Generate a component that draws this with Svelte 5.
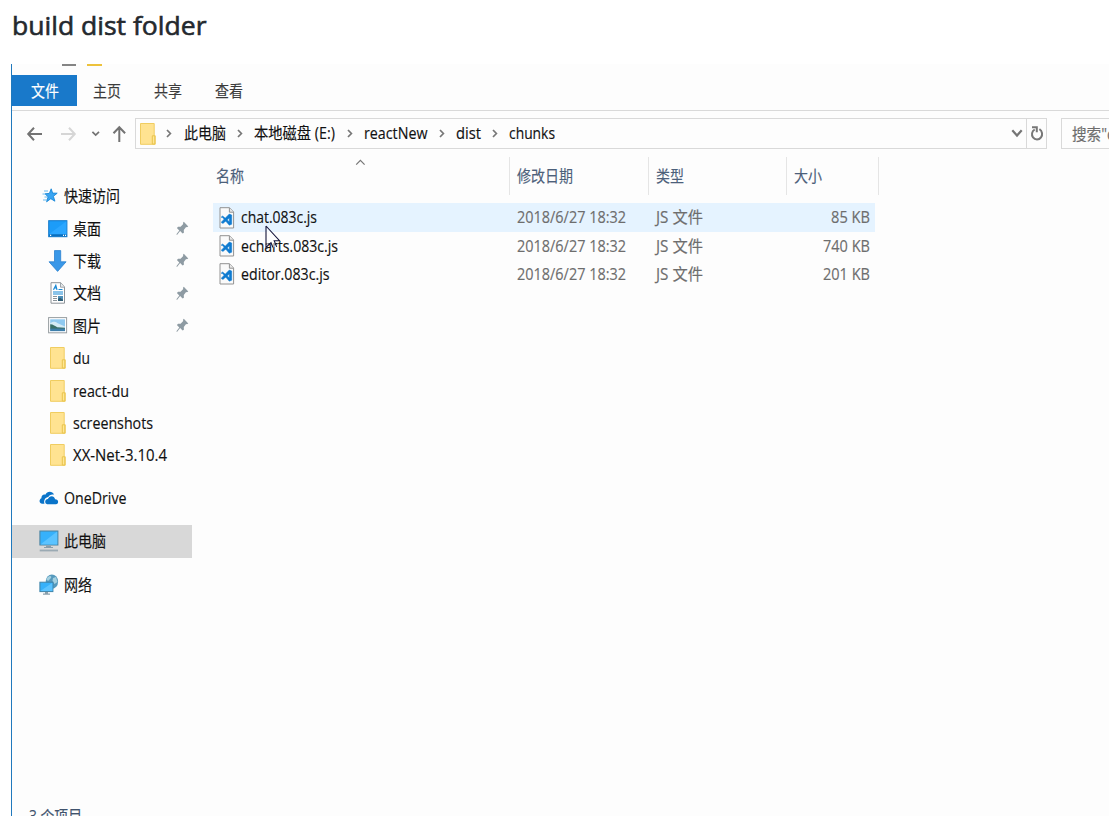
<script>
  const tabs = ['主页', '共享', '查看'];
  const crumbs = [
    { name: '此电脑', w: 42, slot: 70.5 },
    { name: '本地磁盘 (E:)', w: 81, slot: 110 },
    { name: 'reactNew', w: 63.5, slot: 92 },
    { name: 'dist', w: 25, slot: 53 },
    { name: 'chunks', w: 46, slot: 60 },
  ];
  const links = [
    { name: '桌面', w: 28, icon: 'desktop', pin: true },
    { name: '下载', w: 28, icon: 'download', pin: true },
    { name: '文档', w: 28, icon: 'document', pin: true },
    { name: '图片', w: 28, icon: 'picture', pin: true },
    { name: 'du', w: 17, icon: 'folder' },
    { name: 'react-du', w: 56, icon: 'folder' },
    { name: 'screenshots', w: 80, icon: 'folder' },
    { name: 'XX-Net-3.10.4', w: 94, icon: 'folder' },
  ];
  const files = [
    { name: 'chat.083c.js', w: 76, size: '85 KB', sw: 39, active: true },
    { name: 'echarts.083c.js', w: 97, size: '740 KB', sw: 47 },
    { name: 'editor.083c.js', w: 88.5, size: '201 KB', sw: 47 },
  ];
</script>

{#snippet label(text, w)}
  <svg class="label" width={w} height="22" viewBox="0 0 {w} 22">
    <text x="0" y="16.5" textLength={w} lengthAdjust="spacingAndGlyphs">{text}</text>
  </svg>
{/snippet}

{#snippet folder()}
  <svg width="16" height="22" viewBox="0 0 16 22">
    <path d="M.5.5h13.7v12.2h1v8.6H.5z" fill="#ffe391" stroke="#f0cd60" />
    <path d="M12.3 21v-8.2h2.5V21z" fill="#ffe793" stroke="#e9c34d" />
  </svg>
{/snippet}

{#snippet chevron()}
  <svg width="6" height="9" viewBox="0 0 6 9"><path d="M1 1l3.4 3.5L1 8" fill="none" stroke="#777" stroke-width="1.7" /></svg>
{/snippet}

{#snippet icon(kind)}
  {#if kind === 'desktop'}
    <svg width="20" height="18" viewBox="0 0 20 18">
      <rect x=".7" y=".7" width="18.2" height="16" fill="#1c9cf8" stroke="#1478c8" />
      <path d="M1.2 14L18.4 1.2v13z" fill="#2ba6ff" />
      <path d="M1.2 15.3h17.2" stroke="#0b6fbd" stroke-width="2" />
      <path d="M2 15.3h1.2M15 15.3h1M17 15.3h1" stroke="#fff" stroke-width="1.2" />
    </svg>
  {:else if kind === 'download'}
    <svg width="20" height="22" viewBox="0 0 20 22">
      <path d="M6.5.6h6.2v11.2h5.4L9.6 21.4 1 11.8h5.5z" fill="#3a98e8" stroke="#2b82cf" stroke-width=".8" />
    </svg>
  {:else if kind === 'document'}
    <svg width="16" height="22" viewBox="0 0 16 22">
      <path d="M1 .7h9.7L14.5 5v16.2H1z" fill="#fff" stroke="#8d9398" />
      <path d="M10.5.8v4.4h4" fill="#e4e8eb" stroke="#8d9398" stroke-width=".8" />
      <path d="M3.5 7.8L5.8 3.3 7 7.8M4.5 6h2.3M8.5 7.5h4M3 10h10M3 12h10" fill="none" stroke="#1687d4" stroke-width="1.2" />
      <path d="M3 14.5h4M3 16.5h4M3 18.5h4" stroke="#8b949b" />
      <rect x="8" y="14" width="5" height="5" fill="#4d8fb8" />
      <path d="M8 19v-2.2l2-1 3 2V19z" fill="#315d74" />
    </svg>
  {:else if kind === 'picture'}
    <svg width="20" height="17" viewBox="0 0 20 17">
      <rect x=".6" y=".6" width="18" height="15.2" fill="#fff" stroke="#979da1" />
      <rect x="2.2" y="2.3" width="14.8" height="11.8" fill="#8fc9f0" />
      <path d="M2.2 6c3-1 4-2 7 0l7.8 3.5v3.6H2.2z" fill="#d3eaf5" />
      <path d="M2.2 7.2c3 0 5 2 7 3l7.8.6v1.4H2.2z" fill="#396f68" />
      <path d="M2.2 11.6H17v2.5H2.2z" fill="#3d7eaa" />
    </svg>
  {:else}
    {@render folder()}
  {/if}
{/snippet}

<h1>
  <svg width="200" height="40" viewBox="0 0 200 40"><text x="0" y="25" textLength="194.5" lengthAdjust="spacingAndGlyphs">build dist folder</text></svg>
</h1>

<main>
  <div class="quickbar"><i></i><b></b></div>
  <nav class="tabs">
    <span class="file">{@render label('文件', 28)}</span>
    {#each tabs as tab}<span class="tab">{@render label(tab, 28)}</span>{/each}
  </nav>

  <div class="toolbar">
    <div class="arrows">
      <svg width="110" height="20" viewBox="0 0 110 20" fill="none" stroke="#737373" stroke-width="2">
        <path d="M16 10h14M22 3.7L16.2 10l5.8 6.3" />
        <path d="M49 10h13M57 3.7l5.8 6.3-5.8 6.3" stroke="#d6d6d6" />
        <path d="M80.4 7.8l3.3 3.3L87 7.8" stroke-width="1.7" />
        <path d="M107.3 18V3M101.5 9.2l5.8-6 5.8 6" />
      </svg>
    </div>
    <div class="address">
      <span class="addricon">{@render folder()}</span>
      {#each crumbs as c}
        <span class="crumb" style:width="{c.slot}px">{@render chevron()}{@render label(c.name, c.w)}</span>
      {/each}
      <span class="drop"><svg width="12" height="9" viewBox="0 0 12 9"><path d="M1.3 1.3L6 6.5l4.7-5.2" fill="none" stroke="#757575" stroke-width="2.2" /></svg></span>
      <span class="refresh">
        <svg width="14" height="17" viewBox="0 0 14 17" fill="none" stroke="#777" stroke-width="2">
          <path d="M9.4 4.2C12.5 6 12.8 10 11 12.3c-2 2.8-6 2.8-8 .1C1.2 9.9 1.8 6.2 4.7 4.5" />
          <path d="M2 2.2h4.8v5" />
        </svg>
      </span>
    </div>
    <div class="search">{@render label('搜索"d', 44)}</div>
  </div>

  <div class="body">
    <aside>
      <div class="row root">
        <span class="ri quick"><svg width="18" height="18" viewBox="0 0 18 18">
          <path d="M10.2 1.8l1.4 4.3 4.6.1-3.8 3.1 1.5 4.9-4.1-2.5-4.2 3.1 1.5-5L4 6.8l4.4-.4z" fill="#39a5f2" stroke="#1787d8" stroke-width=".9" />
          <path d="M3 4h4M1.5 7h3M3.5 10H6M2 13h4" stroke="#68b9ee" />
        </svg></span>
        {@render label('快速访问', 56)}
      </div>
      {#each links as link}
        <div class="row">
          <span class="li">{@render icon(link.icon)}</span>
          {@render label(link.name, link.w)}
          {#if link.pin}
            <svg class="pin" width="13" height="15" viewBox="0 0 13 15">
              <path d="M7.8.8l4.5 4.7-1.4.8-.8-.3-2.3 3 .1 2.7-1.3.9-2.5-2.7L1 13.9l-.6-.6 2.9-3.9L.9 6.9l1.2-1.2 2.5.1L7.2 3 7 1.7z" fill="#8e9ba3" />
            </svg>
          {/if}
        </div>
      {/each}
      <div class="row root gap">
        <span class="ri"><svg width="20" height="14" viewBox="0 0 20 14">
          <path d="M5.5 12.8H3.2C.2 12.6-.4 8.5 2.4 7.2 2.2 4.5 4.5 3 6.3 3.7 8-.1 13.5-.2 15 3.7c-3.2-.5-4.7.6-5.7 2.2-2.9.2-5 3.4-3.8 6.9z" fill="#0a74c9" />
          <path d="M8.2 13.3c-3-.6-2.5-5 .7-5.2C10 4.5 15.2 4 16.1 8.2c3.8-.1 4 4.8.8 5.1z" fill="#0a74c9" />
        </svg></span>
        {@render label('OneDrive', 62.5)}
      </div>
      <div class="row root gap selected">
        <span class="ri"><svg width="20" height="22" viewBox="0 0 20 22">
          <rect x=".9" y="1" width="18" height="14" fill="#36b1fb" stroke="#4d819d" />
          <path d="M1.4 14.4L18.2 1.6v12.8z" fill="#5bc3ff" />
          <path d="M7 15.5h5v1.6h2v.9H5v-.9h2z" fill="#8a9eaa" />
          <path d="M.7 20.5h18.3" stroke="#9baab3" stroke-width="1.8" />
        </svg></span>
        {@render label('此电脑', 42)}
      </div>
      <div class="row root gap">
        <span class="ri"><svg width="20" height="22" viewBox="0 0 20 22">
          <ellipse cx="12.9" cy="7.7" rx="6.2" ry="7.2" fill="#5599bd" />
          <path d="M9 3c2-2 4-1 3 1L9 7 7 5zM14 4l3-1 1.5 5-3 2-2-3z" fill="#a4d0e0" />
          <rect x=".9" y="8.2" width="13" height="9.4" fill="#36b1fb" stroke="#3f83a8" />
          <path d="M1.4 17L13.4 8.7V17z" fill="#5bc3ff" />
          <path d="M6 18h3v1.6h2v1.2H4v-1.2h2z" fill="#8a9eaa" />
        </svg></span>
        {@render label('网络', 28)}
      </div>
    </aside>

    <section>
      <svg class="sort" width="11" height="7" viewBox="0 0 11 7"><path d="M1.2 5.7l4.2-4.4 4.2 4.4" fill="none" stroke="#777" stroke-width="1.2" /></svg>
      <div class="head">
        <span>{@render label('名称', 28)}</span>
        <span>{@render label('修改日期', 56)}</span>
        <span>{@render label('类型', 28)}</span>
        <span>{@render label('大小', 28)}</span>
      </div>
      {#each files as f}
        <div class="item" class:active={f.active}>
          <span class="name">
            <svg width="16" height="22" viewBox="0 0 16 22">
              <path d="M1 .7h9.5L14.6 5v16H1z" fill="#fafafa" stroke="#929292" />
              <path d="M10.4.8v4.4h4.2" fill="#e6e6e6" stroke="#929292" />
              <path d="M10.3 7l2.4 1v9.2l-2.4 1L3.6 10.6l-1.1-.1v-.8l1.2-.7 6.6 5.8V11L4 16.4l-1.5-.7v-.8z" fill="#0f7bd0" stroke="#0f7bd0" stroke-width=".5" />
            </svg>
            {@render label(f.name, f.w)}
          </span>
          <span>{@render label('2018/6/27 18:32', 109)}</span>
          <span>{@render label('JS 文件', 47)}</span>
          <span class="size">{@render label(f.size, f.sw)}</span>
        </div>
      {/each}
      <svg class="cursor" width="18" height="26" viewBox="0 0 18 26">
        <path d="M1.7 2.7v17.8l4-4.2 2.5 6.2 2.4-1-2.7-6.4h4.8z" fill="#fff" fill-opacity=".6" />
        <path d="M1 1v21.5l5-4.8 2 4.8M1 1l13.5 14.7H9.2l2.5 6.2" fill="none" stroke="#14143a" stroke-width="1.1" />
      </svg>
    </section>
  </div>
  <footer>{@render label('3 个项目', 53)}</footer>
</main>

<style>
  :global(body) { background: #fff; overflow: hidden; }
  :global(#app) { height: 819px; overflow: hidden; }
  svg { display: block; flex: none; overflow: visible; }
  text { font-family: 'Open Sans', 'Noto Sans CJK SC', sans-serif; font-size: 15.5px; fill: currentColor; stroke: currentColor; stroke-width: 0.15px; }
  h1 { margin: 0; padding: 10px 0 0 12px; box-sizing: border-box; height: 64px; color: #24292e; }
  h1 text { font-size: 26px; font-weight: 500; stroke-width: 0.6px; }
  main {
    box-sizing: border-box; margin-left: 11px; width: 1098px; height: 752px; overflow: hidden;
    border-left: 1px solid #2079bd; background: #fdfdfd; color: #111;
    display: flex; flex-direction: column;
  }
  .quickbar { height: 11px; display: flex; gap: 11px; padding-left: 50px; box-sizing: border-box; flex: none; }
  .quickbar i { width: 14px; height: 1.5px; background: #858585; }
  .quickbar b { width: 15px; height: 1.5px; background: #edc23c; }
  .tabs { height: 35px; display: flex; border-bottom: 1px solid #d9d9d9; color: #3b3b3b; flex: none; }
  .file { width: 65px; height: 31px; background: #1979ca; color: #fff; display: flex; align-items: center; justify-content: center; }
  .tab { width: 61px; height: 31px; padding-left: 16px; box-sizing: border-box; display: flex; align-items: center; }
  .toolbar { height: 46px; padding-top: 7px; box-sizing: border-box; display: flex; flex: none; }
  .arrows { width: 123px; padding-top: 6px; flex: none; }
  .address { width: 912px; height: 31px; box-sizing: border-box; border: 1px solid #d9d9d9; display: flex; align-items: center; flex: none; }
  .addricon { width: 30px; padding-left: 4px; box-sizing: border-box; flex: none; }
  .crumb { display: flex; align-items: center; gap: 11.7px; flex: none; }
  .crumb .label { margin-top: -2px; }
  .drop { margin-left: auto; padding-right: 3px; }
  .refresh { width: 19px; height: 29px; border-left: 1px solid #d9d9d9; display: flex; align-items: center; justify-content: center; }
  .search { margin-left: 14px; width: 60px; height: 31px; box-sizing: border-box; border: 1px solid #d9d9d9; border-right: 0; padding-left: 10px; display: flex; align-items: center; overflow: hidden; color: #6d6d6d; flex: none; }
  .body { display: flex; flex: 1; min-height: 0; }
  aside { width: 180px; padding-top: 23px; flex: none; }
  .row { height: 32.4px; display: flex; align-items: center; padding-left: 36px; }
  .row.root { padding-left: 27px; }
  .row.gap { margin-top: 10.7px; }
  .row.selected { background: #d8d8d8; }
  .li { width: 20px; display: flex; justify-content: center; margin-right: 5px; }
  .ri { width: 25px; }
  .quick { padding-left: 2px; width: 23px; }
  .pin { margin-left: auto; margin-right: 3px; }
  section { position: relative; padding-left: 21px; }
  .head, .item { display: grid; grid-template-columns: 297px 139px 138px 92px; }
  .head { height: 38px; margin-bottom: 8px; color: #4c607a; }
  .head span { display: flex; align-items: center; border-right: 1px solid #e5e5e5; padding-left: 7px; }
  .head span:first-child { padding-left: 3px; }
  .item { height: 28.2px; width: 662px; align-items: center; color: #6d6d6d; }
  .item span { padding-left: 7px; }
  .item .name { display: flex; align-items: center; gap: 5.5px; padding-left: 6px; color: #111; }
  .item .size { padding: 0; width: 83px; display: flex; justify-content: flex-end; }
  .item .label { margin-top: -1px; }
  .active { background: #e5f3ff; height: 29px; }
  .sort { position: absolute; left: 163px; top: 2px; }
  .cursor { position: absolute; left: 73px; top: 68px; }
  footer { height: 12px; flex: none; padding-left: 17px; color: #40536d; overflow: hidden; }
  footer .label { margin-top: 1px; }
</style>
